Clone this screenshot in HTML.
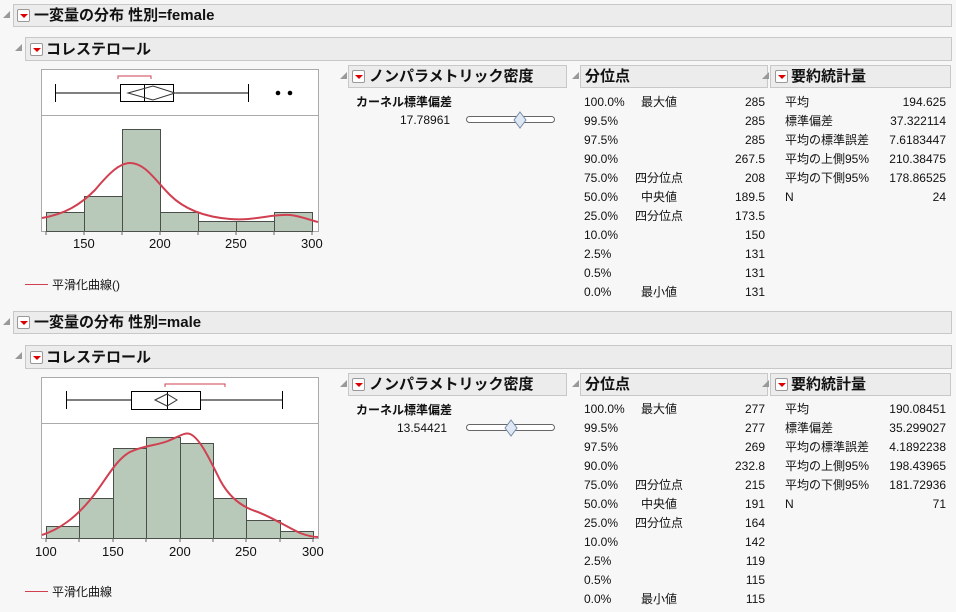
<!DOCTYPE html>
<html><head><meta charset="utf-8"><style>
body{margin:0;width:956px;height:612px;background:#f7f7f7;position:relative;overflow:hidden;font-family:"Liberation Sans","Noto Sans CJK JP",sans-serif;font-size:12px;color:#111}
.a{position:absolute;white-space:nowrap}
.hd{position:absolute;background:#ececec;border:1px solid #c8c8c8;font-weight:bold;font-size:15px;line-height:21px;box-sizing:border-box}
.btn{position:absolute;width:13px;height:13px;border:1px solid #999;background:#fff;border-radius:2px;box-sizing:border-box}
.btn:after{content:"";position:absolute;left:2px;top:4px;border-left:4px solid transparent;border-right:4px solid transparent;border-top:4px solid #d00}
.tri{position:absolute;width:0;height:0;border-left:7px solid transparent;border-bottom:7px solid #999}
.r{text-align:right}
</style></head><body>
<svg width="0" height="0" style="position:absolute"></svg>

<!-- female -->
<div class="tri" style="left:3px;top:11px"></div>
<div class="hd" style="left:13px;top:4px;width:939px;height:23px"><div class="btn" style="left:3px;top:4px"></div><span class="a" style="left:20px;top:0">一変量の分布 性別=female</span></div>
<div class="tri" style="left:15px;top:44px"></div>
<div class="hd" style="left:25px;top:37px;width:927px;height:24px"><div class="btn" style="left:4px;top:5px"></div><span class="a" style="left:20px;top:1px">コレステロール</span></div>

<svg class="a" style="left:0;top:0" width="330" height="300">
<rect x="41.5" y="69.5" width="277" height="162" fill="#fff" stroke="#aaa"/>
<line x1="41" y1="115.5" x2="318" y2="115.5" stroke="#aaa"/>
<path d="M118 79v-3h33v3" fill="none" stroke="#d04050"/>
<line x1="55" y1="93" x2="120" y2="93" stroke="#000"/><line x1="173" y1="93" x2="248" y2="93" stroke="#000"/>
<line x1="55.5" y1="84" x2="55.5" y2="102" stroke="#000"/><line x1="248.5" y1="84" x2="248.5" y2="102" stroke="#000"/>
<rect x="120.5" y="84.5" width="53" height="17" fill="none" stroke="#000"/>
<line x1="144.5" y1="84" x2="144.5" y2="102" stroke="#000"/>
<path d="M128 93L153 86L175 93L153 100Z" fill="none" stroke="#333"/>
<circle cx="278" cy="93" r="2.3"/><circle cx="290" cy="93" r="2.3"/>
<g fill="#b9c9b9" stroke="#4a4f4a">
<rect x="46.5" y="212.5" width="38" height="19"/><rect x="84.5" y="196.5" width="38" height="35"/><rect x="122.5" y="129.5" width="38" height="102"/><rect x="160.5" y="212.5" width="38" height="19"/><rect x="198.5" y="221.5" width="38" height="10"/><rect x="236.5" y="221.5" width="38" height="10"/><rect x="274.5" y="212.5" width="38" height="19"/>
</g>
<path d="M42 218C65 214 80 205 95 190C110 172 120 163 130 163C145 163 155 180 170 195C185 210 205 217 230 219C255 221 270 214 290 215C300 216 310 220 318 222" fill="none" stroke="#d04050" stroke-width="2"/>
<g stroke="#666"><line x1="46" y1="231" x2="46" y2="235"/><line x1="84" y1="231" x2="84" y2="235"/><line x1="122" y1="231" x2="122" y2="235"/><line x1="160" y1="231" x2="160" y2="235"/><line x1="198" y1="231" x2="198" y2="235"/><line x1="236" y1="231" x2="236" y2="235"/><line x1="274" y1="231" x2="274" y2="235"/><line x1="312" y1="231" x2="312" y2="235"/></g>
<line x1="25" y1="284.5" x2="48" y2="284.5" stroke="#d04050"/>
</svg>
<span class="a" style="left:73px;top:236px;font-size:13px">150</span><span class="a" style="left:149px;top:236px;font-size:13px">200</span><span class="a" style="left:225px;top:236px;font-size:13px">250</span><span class="a" style="left:301px;top:236px;font-size:13px">300</span>
<span class="a" style="left:52px;top:276px">平滑化曲線()</span>

<!-- male -->
<div class="tri" style="left:3px;top:318px"></div>
<div class="hd" style="left:13px;top:311px;width:939px;height:23px"><div class="btn" style="left:3px;top:4px"></div><span class="a" style="left:20px;top:0">一変量の分布 性別=male</span></div>
<div class="tri" style="left:15px;top:352px"></div>
<div class="hd" style="left:25px;top:345px;width:927px;height:24px"><div class="btn" style="left:4px;top:5px"></div><span class="a" style="left:20px;top:1px">コレステロール</span></div>

<svg class="a" style="left:0;top:300px" width="330" height="312">
<rect x="41.5" y="77.5" width="277" height="161" fill="#fff" stroke="#aaa"/>
<line x1="41" y1="123.5" x2="318" y2="123.5" stroke="#aaa"/>
<path d="M165 87v-3h60v3" fill="none" stroke="#d04050"/>
<line x1="66" y1="100" x2="131" y2="100" stroke="#000"/><line x1="200" y1="100" x2="283" y2="100" stroke="#000"/>
<line x1="66.5" y1="91" x2="66.5" y2="109" stroke="#000"/><line x1="282.5" y1="91" x2="282.5" y2="109" stroke="#000"/>
<rect x="131.5" y="91.5" width="69" height="18" fill="none" stroke="#000"/>
<line x1="167.5" y1="91" x2="167.5" y2="110" stroke="#000"/>
<path d="M155 100L167 94L177 100L167 106Z" fill="none" stroke="#333"/>
<g fill="#b9c9b9" stroke="#4a4f4a">
<rect x="46.5" y="226.5" width="33" height="12"/><rect x="79.5" y="198.5" width="34" height="40"/><rect x="113.5" y="148.5" width="33" height="90"/><rect x="146.5" y="137.5" width="34" height="101"/><rect x="180.5" y="143.5" width="33" height="95"/><rect x="213.5" y="198.5" width="33" height="40"/><rect x="246.5" y="220.5" width="34" height="18"/><rect x="280.5" y="231.5" width="33" height="7"/>
</g>
<path d="M42 235C60 229 75 218 90 200C105 182 115 160 130 152C145 145 155 146 168 141C180 136 185 132 190 134C200 138 210 160 220 180C228 195 240 206 255 211C270 216 285 226 300 233C308 236 313 237 318 237" fill="none" stroke="#d04050" stroke-width="2"/>
<g stroke="#666"><line x1="46" y1="238" x2="46" y2="242"/><line x1="79" y1="238" x2="79" y2="242"/><line x1="113" y1="238" x2="113" y2="242"/><line x1="146" y1="238" x2="146" y2="242"/><line x1="180" y1="238" x2="180" y2="242"/><line x1="213" y1="238" x2="213" y2="242"/><line x1="246" y1="238" x2="246" y2="242"/><line x1="280" y1="238" x2="280" y2="242"/><line x1="313" y1="238" x2="313" y2="242"/></g>
<line x1="25" y1="591.5" x2="48" y2="591.5" stroke="#d04050" transform="translate(0,-300)"/>
</svg>
<span class="a" style="left:35px;top:544px;font-size:13px">100</span><span class="a" style="left:102px;top:544px;font-size:13px">150</span><span class="a" style="left:169px;top:544px;font-size:13px">200</span><span class="a" style="left:235px;top:544px;font-size:13px">250</span><span class="a" style="left:302px;top:544px;font-size:13px">300</span>
<span class="a" style="left:52px;top:583px">平滑化曲線</span>

<!-- right panels generated -->
<div id="p1"></div>
<script></script>

<!-- female right -->
<div class="tri" style="left:340px;top:72px"></div>
<div class="hd" style="left:348px;top:65px;width:219px;height:23px"><div class="btn" style="left:3px;top:4px"></div><span class="a" style="left:20px;top:0">ノンパラメトリック密度</span></div>
<span class="a" style="left:356px;top:93px;font-weight:bold">カーネル標準偏差</span>
<span class="a" style="left:400px;top:113px">17.78961</span>
<svg class="a" style="left:462px;top:110px" width="100" height="20"><rect x="4.5" y="6.5" width="88" height="6" rx="3" fill="#fff" stroke="#666"/><path d="M58 2L64 10L58 18L52 10Z" fill="#dde8f4" stroke="#7a8ca8"/></svg>
<div class="tri" style="left:572px;top:72px"></div>
<div class="hd" style="left:580px;top:65px;width:188px;height:23px"><span class="a" style="left:4px;top:0">分位点</span></div>
<div class="tri" style="left:762px;top:72px"></div>
<div class="hd" style="left:770px;top:65px;width:181px;height:23px"><div class="btn" style="left:4px;top:4px"></div><span class="a" style="left:20px;top:0">要約統計量</span></div>

<!-- male right -->
<div class="tri" style="left:340px;top:380px"></div>
<div class="hd" style="left:348px;top:373px;width:219px;height:23px"><div class="btn" style="left:3px;top:4px"></div><span class="a" style="left:20px;top:0">ノンパラメトリック密度</span></div>
<span class="a" style="left:356px;top:401px;font-weight:bold">カーネル標準偏差</span>
<span class="a" style="left:397px;top:421px">13.54421</span>
<svg class="a" style="left:462px;top:418px" width="100" height="20"><rect x="4.5" y="6.5" width="88" height="6" rx="3" fill="#fff" stroke="#666"/><path d="M49 2L55 10L49 18L43 10Z" fill="#dde8f4" stroke="#7a8ca8"/></svg>
<div class="tri" style="left:572px;top:380px"></div>
<div class="hd" style="left:580px;top:373px;width:188px;height:23px"><span class="a" style="left:4px;top:0">分位点</span></div>
<div class="tri" style="left:762px;top:380px"></div>
<div class="hd" style="left:770px;top:373px;width:181px;height:23px"><div class="btn" style="left:4px;top:4px"></div><span class="a" style="left:20px;top:0">要約統計量</span></div>

<div style="position:absolute;left:584px;top:93px;line-height:19px">
<div>100.0%</div><div>99.5%</div><div>97.5%</div><div>90.0%</div><div>75.0%</div><div>50.0%</div><div>25.0%</div><div>10.0%</div><div>2.5%</div><div>0.5%</div><div>0.0%</div></div>
<div style="position:absolute;left:634px;top:93px;line-height:19px;width:50px;text-align:center">
<div>最大値</div><div>&nbsp;</div><div>&nbsp;</div><div>&nbsp;</div><div>四分位点</div><div>中央値</div><div>四分位点</div><div>&nbsp;</div><div>&nbsp;</div><div>&nbsp;</div><div>最小値</div></div>
<div style="position:absolute;left:700px;width:65px;top:93px;line-height:19px" class="r">
<div>285</div><div>285</div><div>285</div><div>267.5</div><div>208</div><div>189.5</div><div>173.5</div><div>150</div><div>131</div><div>131</div><div>131</div></div>
<div style="position:absolute;left:785px;top:93px;line-height:19px">
<div>平均</div><div>標準偏差</div><div>平均の標準誤差</div><div>平均の上側95%</div><div>平均の下側95%</div><div>N</div></div>
<div style="position:absolute;left:860px;width:86px;top:93px;line-height:19px" class="r">
<div>194.625</div><div>37.322114</div><div>7.6183447</div><div>210.38475</div><div>178.86525</div><div>24</div></div>

<div style="position:absolute;left:584px;top:400px;line-height:19px">
<div>100.0%</div><div>99.5%</div><div>97.5%</div><div>90.0%</div><div>75.0%</div><div>50.0%</div><div>25.0%</div><div>10.0%</div><div>2.5%</div><div>0.5%</div><div>0.0%</div></div>
<div style="position:absolute;left:634px;top:400px;line-height:19px;width:50px;text-align:center">
<div>最大値</div><div>&nbsp;</div><div>&nbsp;</div><div>&nbsp;</div><div>四分位点</div><div>中央値</div><div>四分位点</div><div>&nbsp;</div><div>&nbsp;</div><div>&nbsp;</div><div>最小値</div></div>
<div style="position:absolute;left:700px;width:65px;top:400px;line-height:19px" class="r">
<div>277</div><div>277</div><div>269</div><div>232.8</div><div>215</div><div>191</div><div>164</div><div>142</div><div>119</div><div>115</div><div>115</div></div>
<div style="position:absolute;left:785px;top:400px;line-height:19px">
<div>平均</div><div>標準偏差</div><div>平均の標準誤差</div><div>平均の上側95%</div><div>平均の下側95%</div><div>N</div></div>
<div style="position:absolute;left:860px;width:86px;top:400px;line-height:19px" class="r">
<div>190.08451</div><div>35.299027</div><div>4.1892238</div><div>198.43965</div><div>181.72936</div><div>71</div></div>
</body></html>
